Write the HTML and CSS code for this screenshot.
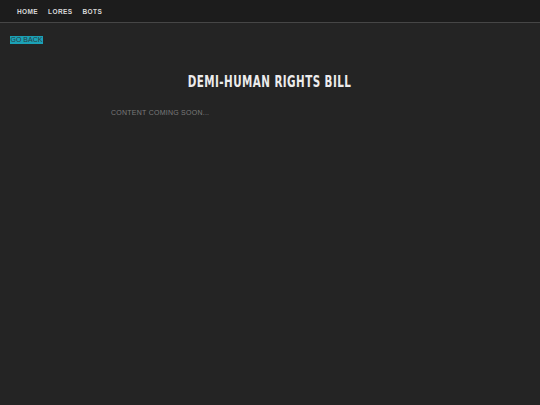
FILE: index.html
```html
<!DOCTYPE html>
<html>
<head>
<meta charset="utf-8">
<link rel="stylesheet" href="styles.css">
</head>
<body>
<nav class="nav">
  <a class="nav-link" href="#">HOME</a>
  <a class="nav-link" href="#">LORES</a>
  <a class="nav-link" href="#">BOTS</a>
</nav>
<main class="main">
  <div class="back-row"><a class="back" href="#">GO BACK</a></div>
  <div class="title-row"><h1 class="title">DEMI-HUMAN RIGHTS BILL</h1></div>
  <p class="soon">CONTENT COMING SOON...</p>
</main>
</body>
</html>
```
FILE: styles.css
```css
html, body {
  margin: 0;
  padding: 0;
  background: #242424;
  height: 100%;
}
body {
  font-family: "Liberation Sans", Arial, sans-serif;
}
.nav {
  display: flex;
  align-items: center;
  gap: 10px;
  height: 23px;
  padding: 0 0 0 17px;
  background: #1c1c1c;
  border-bottom: 1px solid #464646;
  box-sizing: border-box;
}
.nav-link {
  font-size: 6.5px;
  font-weight: bold;
  letter-spacing: 0.4px;
  color: #d8d8d8;
  text-decoration: none;
}
.main {
  padding: 13px 10px 0 10px;
}
.back-row {
  display: flex;
}
.back {
  display: block;
  font-size: 7px;
  line-height: 8px;
  letter-spacing: 0;
  color: #2b3b40;
  background: #1ba1b6;
  text-decoration: none;
  padding: 0 0.5px;
}
.title-row {
  display: flex;
  justify-content: center;
  margin-top: 28px;
}
.title {
  margin: 0;
  font-family: "DejaVu Sans Condensed", "DejaVu Sans", sans-serif;
  font-weight: bold;
  font-size: 16px;
  line-height: 20px;
  letter-spacing: 0.6px;
  color: #ececec;
  transform: scaleX(0.72);
}
.soon {
  margin: 17px 0 0 101px;
  font-size: 7px;
  letter-spacing: 0.25px;
  color: #7a7a7a;
}
```
